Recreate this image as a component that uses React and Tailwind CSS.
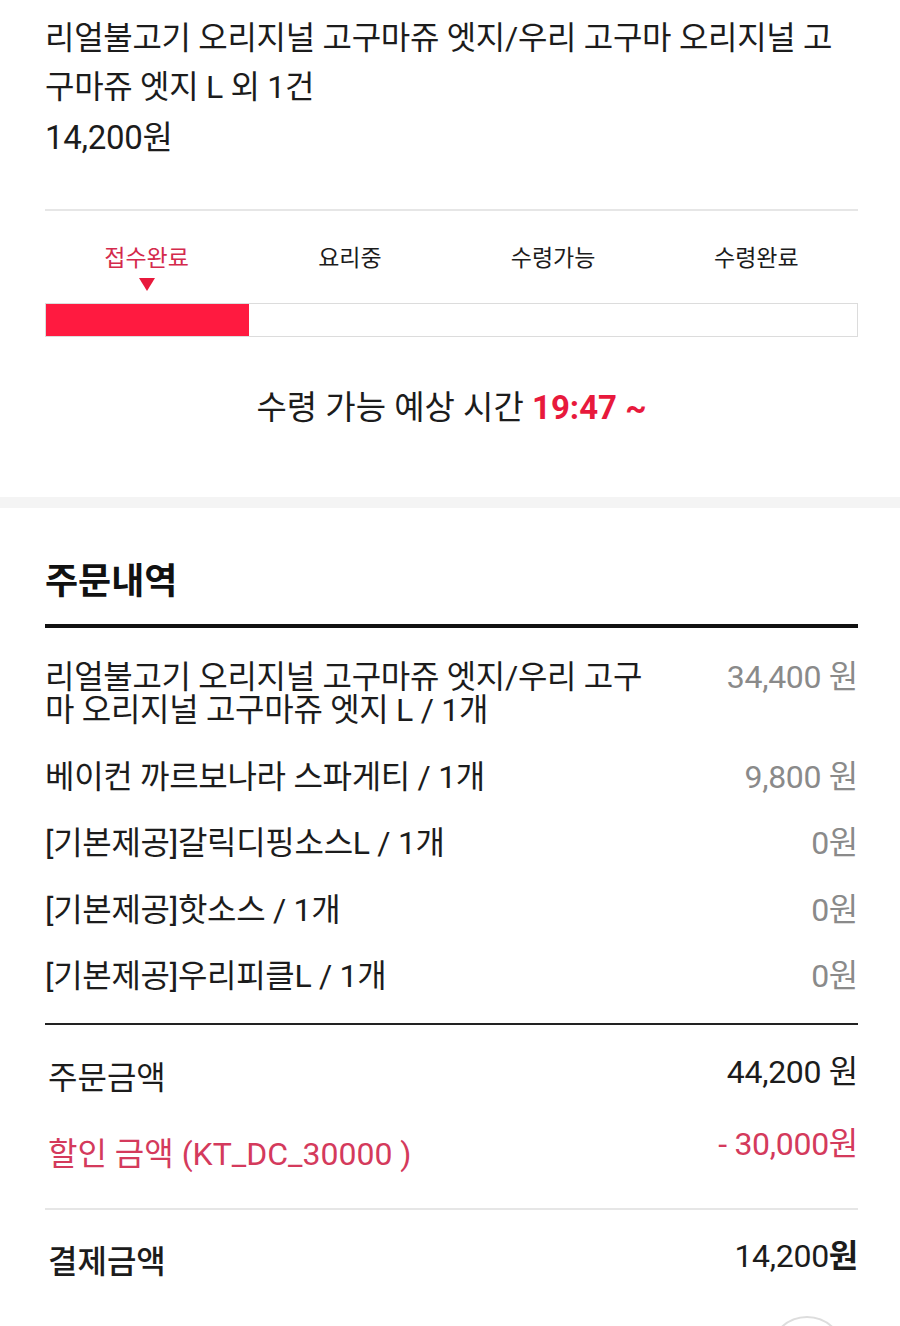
import React from 'react';

const steps = ['접수완료', '요리중', '수령가능', '수령완료'];

const items = [
  { name: '리얼불고기 오리지널 고구마쥬 엣지/우리 고구\n마 오리지널 고구마쥬 엣지 L / 1개', price: '34,400 원' },
  { name: '베이컨 까르보나라 스파게티 / 1개', price: '9,800 원' },
  { name: '[기본제공]갈릭디핑소스L / 1개', price: '0원' },
  { name: '[기본제공]핫소스 / 1개', price: '0원' },
  { name: '[기본제공]우리피클L / 1개', price: '0원' },
];

const App = () => {
  const current = 0;

  return (
    <div className="relative w-[900px] h-[1326px] overflow-hidden bg-white text-[#1c1c1c] font-['Roboto','Noto_Sans_CJK_KR',sans-serif]">
      {/* order summary */}
      <section className="pl-[45px] pr-[42px] pt-[14px]">
        <p className="text-[32px] leading-[49px] tracking-[-0.3px]">
          리얼불고기 오리지널 고구마쥬 엣지/우리 고구마 오리지널 고<br />구마쥬 엣지 L 외 1건
        </p>
        <p className="text-[33px] leading-[51px] tracking-[-0.3px]">14,200원</p>
        <div className="mt-[46px] h-[2px] bg-[#e6e6e6]" />

        {/* progress */}
        <div className="grid grid-cols-4 pt-[33px]">
          {steps.map((s, i) => (
            <div key={s} className="flex flex-col items-center">
              <span className={`text-[23px] leading-[30px] ${i === current ? 'text-[#d42a4c]' : 'text-[#1c1c1c]'}`}>{s}</span>
              {i === current ? (
                <svg className="mt-[4px]" width="16" height="13" viewBox="0 0 16 13">
                  <path d="M0 0 H16 L8 13 Z" fill="#e8193c" />
                </svg>
              ) : (
                <div className="mt-[4px] h-[13px]" />
              )}
            </div>
          ))}
        </div>
        <div className="mt-[12px] h-[34px] border border-[#dcdcdc] bg-white">
          <div className="h-full w-1/4 bg-[#ff1a40]" />
        </div>

        <p className="mt-[51px] text-center text-[33px] leading-[40px]">
          수령 가능 예상 시간 <span className="font-bold text-[#e8193c]">19:47 ~</span>
        </p>
      </section>

      <div className="mt-[69px] h-[11px] bg-[#f4f4f4]" />

      {/* order details */}
      <section className="pl-[45px] pr-[42px] pt-[52px]">
        <h2 className="text-[36px] leading-[44px] font-bold text-[#111]">주문내역</h2>
        <div className="mt-[20px] h-[4px] bg-[#111]" />

        <ul className="pt-[33px] flex flex-col gap-[33.5px]">
          {items.map((it) => (
            <li key={it.name} className="flex justify-between items-start">
              <span className="w-[650px] whitespace-pre-line text-[32px] leading-[33px] tracking-[-0.3px]">{it.name}</span>
              <span className="text-[32px] leading-[33px] tracking-[-0.3px] text-[#8a8a8a]">{it.price}</span>
            </li>
          ))}
        </ul>
        <div className="mt-[30px] h-[2px] bg-[#222]" />

        <div className="pt-[33px] flex justify-between items-start">
          <span className="text-[32px] leading-[40px] pl-[3px]">주문금액</span>
          <span className="-mt-[6px] text-[32px] leading-[40px] tracking-[-0.3px]">44,200 원</span>
        </div>
        <div className="mt-[36px] flex justify-between items-start text-[#d43a5c]">
          <span className="text-[32px] leading-[40px] pl-[3px]">할인 금액 (KT_DC_30000 )</span>
          <span className="-mt-[10px] text-[32px] leading-[40px] tracking-[-0.3px]">- 30,000원</span>
        </div>
        <div className="mt-[34px] h-[2px] bg-[#e6e6e6]" />

        <div className="pt-[32px] flex justify-between items-start">
          <span className="text-[32px] leading-[40px] font-medium pl-[3px]">결제금액</span>
          <span className="-mt-[6px] text-[32px] leading-[40px] tracking-[-0.3px]">
            14,200<span className="font-bold">원</span>
          </span>
        </div>
      </section>

      {/* floating scroll button */}
      <div className="absolute left-[769px] top-[1316px] w-[76px] h-[76px] rounded-full border-2 border-[#dddddd] bg-white" />
    </div>
  );
};

export default App;
